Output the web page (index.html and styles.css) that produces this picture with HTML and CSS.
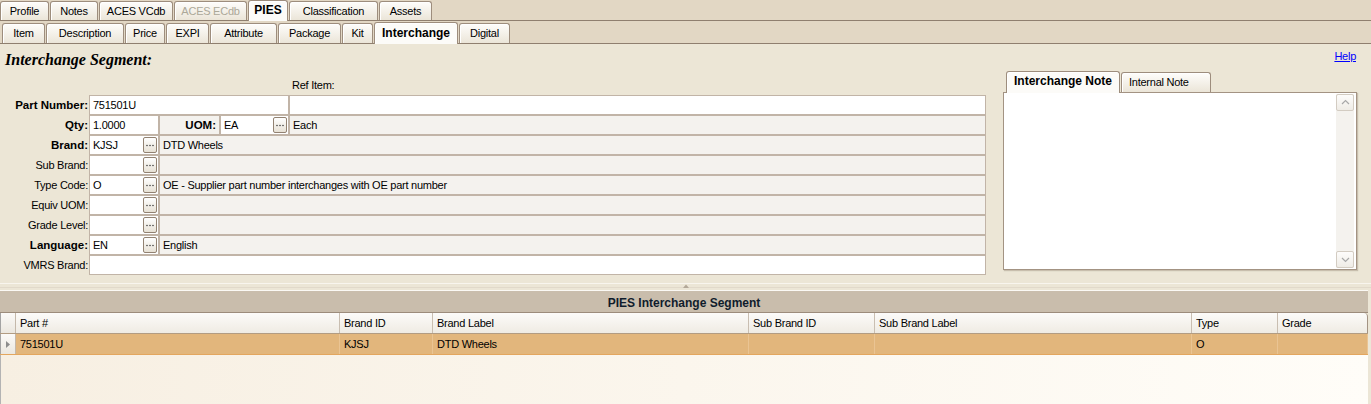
FILE: index.html
```html
<!DOCTYPE html>
<html>
<head>
<meta charset="utf-8">
<title>Interchange</title>
<link rel="stylesheet" href="styles.css">
</head>
<body>
<div class="app">
  <div class="tabbar tabbar-top">
    <div class="tab">Profile</div>
    <div class="tab">Notes</div>
    <div class="tab">ACES VCdb</div>
    <div class="tab disabled">ACES ECdb</div>
    <div class="tab active">PIES</div>
    <div class="tab">Classification</div>
    <div class="tab">Assets</div>
  </div>
  <div class="tabbar tabbar-sub">
    <div class="tab">Item</div>
    <div class="tab">Description</div>
    <div class="tab">Price</div>
    <div class="tab">EXPI</div>
    <div class="tab">Attribute</div>
    <div class="tab">Package</div>
    <div class="tab">Kit</div>
    <div class="tab active">Interchange</div>
    <div class="tab">Digital</div>
  </div>

  <div class="head">
    <div class="title">Interchange Segment:</div>
    <a class="help" href="#">Help</a>
  </div>

  <div class="main">
    <div class="form">
      <div class="ref-label">Ref Item:</div>

      <div class="lbl b">Part Number:</div>
      <div class="cell in span-2-5">751501U</div>
      <div class="cell in"></div>

      <div class="lbl b">Qty:</div>
      <div class="cell in">1.0000</div>
      <div class="cell ro lblcell b">UOM:</div>
      <div class="cell in"><span class="val">EA</span><span class="dots"><svg width="12" height="14" viewBox="0 0 12 14"><circle cx="3" cy="7.5" r="0.8" fill="#444"/><circle cx="6" cy="7.5" r="0.8" fill="#444"/><circle cx="9" cy="7.5" r="0.8" fill="#444"/></svg></span></div>
      <div class="cell ro">Each</div>

      <div class="lbl b">Brand:</div>
      <div class="cell in"><span class="val">KJSJ</span><span class="dots"><svg width="12" height="14" viewBox="0 0 12 14"><circle cx="3" cy="7.5" r="0.8" fill="#444"/><circle cx="6" cy="7.5" r="0.8" fill="#444"/><circle cx="9" cy="7.5" r="0.8" fill="#444"/></svg></span></div>
      <div class="cell ro span-3-6">DTD Wheels</div>

      <div class="lbl">Sub Brand:</div>
      <div class="cell in"><span class="val"></span><span class="dots"><svg width="12" height="14" viewBox="0 0 12 14"><circle cx="3" cy="7.5" r="0.8" fill="#444"/><circle cx="6" cy="7.5" r="0.8" fill="#444"/><circle cx="9" cy="7.5" r="0.8" fill="#444"/></svg></span></div>
      <div class="cell ro span-3-6"></div>

      <div class="lbl">Type Code:</div>
      <div class="cell in"><span class="val">O</span><span class="dots"><svg width="12" height="14" viewBox="0 0 12 14"><circle cx="3" cy="7.5" r="0.8" fill="#444"/><circle cx="6" cy="7.5" r="0.8" fill="#444"/><circle cx="9" cy="7.5" r="0.8" fill="#444"/></svg></span></div>
      <div class="cell ro span-3-6">OE - Supplier part number interchanges with OE part number</div>

      <div class="lbl">Equiv UOM:</div>
      <div class="cell in"><span class="val"></span><span class="dots"><svg width="12" height="14" viewBox="0 0 12 14"><circle cx="3" cy="7.5" r="0.8" fill="#444"/><circle cx="6" cy="7.5" r="0.8" fill="#444"/><circle cx="9" cy="7.5" r="0.8" fill="#444"/></svg></span></div>
      <div class="cell ro span-3-6"></div>

      <div class="lbl">Grade Level:</div>
      <div class="cell in"><span class="val"></span><span class="dots"><svg width="12" height="14" viewBox="0 0 12 14"><circle cx="3" cy="7.5" r="0.8" fill="#444"/><circle cx="6" cy="7.5" r="0.8" fill="#444"/><circle cx="9" cy="7.5" r="0.8" fill="#444"/></svg></span></div>
      <div class="cell ro span-3-6"></div>

      <div class="lbl b">Language:</div>
      <div class="cell in"><span class="val">EN</span><span class="dots"><svg width="12" height="14" viewBox="0 0 12 14"><circle cx="3" cy="7.5" r="0.8" fill="#444"/><circle cx="6" cy="7.5" r="0.8" fill="#444"/><circle cx="9" cy="7.5" r="0.8" fill="#444"/></svg></span></div>
      <div class="cell ro span-3-6">English</div>

      <div class="lbl">VMRS Brand:</div>
      <div class="cell in span-2-6"></div>
    </div>

    <div class="notes">
      <div class="ntabs">
        <div class="ntab active">Interchange Note</div>
        <div class="ntab">Internal Note</div>
      </div>
      <div class="nbox">
        <div class="vscroll">
          <div class="sbtn"><svg width="15" height="15" viewBox="0 0 15 15"><polyline points="4,9 7.5,5.5 11,9" fill="none" stroke="#a8a8a8" stroke-width="1.2"/></svg></div>
          <div class="sbtn"><svg width="15" height="15" viewBox="0 0 15 15"><polyline points="4,6 7.5,9.5 11,6" fill="none" stroke="#a8a8a8" stroke-width="1.2"/></svg></div>
        </div>
      </div>
    </div>
  </div>

  <div class="splitter">
    <div class="splitbar"><svg width="6" height="4" viewBox="0 0 6 4"><polygon points="0,4 3,0.5 6,4" fill="#b3a898"/></svg></div>
  </div>

  <div class="dgrid">
    <div class="dg-title">PIES Interchange Segment</div>
    <div class="dg-row dg-head">
      <div class="dg-cell c-rh"></div>
      <div class="dg-cell c-part">Part #</div>
      <div class="dg-cell c-bid">Brand ID</div>
      <div class="dg-cell c-blabel">Brand Label</div>
      <div class="dg-cell c-sid">Sub Brand ID</div>
      <div class="dg-cell c-slabel">Sub Brand Label</div>
      <div class="dg-cell c-type">Type</div>
      <div class="dg-cell c-grade">Grade</div>
    </div>
    <div class="dg-row dg-data">
      <div class="dg-cell c-rh"><svg width="4" height="7" viewBox="0 0 4 7"><polygon points="0,0 4,3.5 0,7" fill="#8c8c8c"/></svg></div>
      <div class="dg-cell c-part">751501U</div>
      <div class="dg-cell c-bid">KJSJ</div>
      <div class="dg-cell c-blabel">DTD Wheels</div>
      <div class="dg-cell c-sid"></div>
      <div class="dg-cell c-slabel"></div>
      <div class="dg-cell c-type">O</div>
      <div class="dg-cell c-grade"></div>
    </div>
    <div class="dg-fill"></div>
  </div>
</div>
</body>
</html>
```

FILE: styles.css
```css
* { box-sizing: border-box; margin: 0; padding: 0; }
html, body { width: 1371px; height: 404px; overflow: hidden; }
body {
  font-family: "Liberation Sans", Arial, sans-serif;
  font-size: 11px;
  letter-spacing: -0.25px;
  color: #000;
  background: #ece6d6;
}

/* ---------- tab bars ---------- */
.tabbar {
  display: flex;
  align-items: flex-end;
  gap: 1px;
  background: #e2d7c4;
  border-bottom: 1px solid #8f7f6f;
}
.tabbar-top { height: 21px; }
.tabbar-sub { height: 23px; padding-left: 2px; }

.tab {
  height: 19px;
  line-height: 18px;
  text-align: center;
  white-space: nowrap;
  border: 1px solid #9d8d7d;
  border-bottom: none;
  border-radius: 3px 3px 0 0;
  background: linear-gradient(#fefdfb, #ebe5d8);
  box-shadow: inset 1px 1px 0 #ffffff;
}
.tabbar-sub .tab { height: 20px; line-height: 19px; }
.tab.disabled { color: #aca899; }
.tab.active {
  position: relative;
  z-index: 1;
  height: 21px;
  margin-bottom: -1px;
  font-weight: bold;
  font-size: 12px;
  letter-spacing: 0;
  background: #fcfbf8;
}
.tabbar-sub .tab.active { height: 22px; line-height: 20px; }

.tabbar-top .tab:nth-child(1) { width: 49px; }
.tabbar-top .tab:nth-child(2) { width: 48px; }
.tabbar-top .tab:nth-child(3) { width: 74px; }
.tabbar-top .tab:nth-child(4) { width: 73px; }
.tabbar-top .tab:nth-child(5) { width: 40px; }
.tabbar-top .tab:nth-child(6) { width: 89px; }
.tabbar-top .tab:nth-child(7) { width: 53px; }

.tabbar-sub .tab:nth-child(1) { width: 43px; }
.tabbar-sub .tab:nth-child(2) { width: 78px; }
.tabbar-sub .tab:nth-child(3) { width: 40px; }
.tabbar-sub .tab:nth-child(4) { width: 43px; }
.tabbar-sub .tab:nth-child(5) { width: 67px; }
.tabbar-sub .tab:nth-child(6) { width: 63px; }
.tabbar-sub .tab:nth-child(7) { width: 31px; }
.tabbar-sub .tab:nth-child(8) { width: 84px; }
.tabbar-sub .tab:nth-child(9) { width: 51px; }

/* ---------- heading ---------- */
.head {
  height: 27px;
  padding-top: 6px;
  display: flex;
  justify-content: space-between;
  align-items: flex-start;
}
.title {
  font-family: "Liberation Serif", "Times New Roman", serif;
  font-weight: bold;
  font-style: italic;
  font-size: 16px;
  letter-spacing: 0;
  line-height: 20px;
  padding-left: 5px;
}
.help {
  color: #0000ff;
  text-decoration: underline;
  line-height: 13px;
  margin-right: 15px;
}

/* ---------- form ---------- */
.main { display: flex; align-items: flex-start; }
.form {
  width: 986px;
  padding-top: 7px;
  display: grid;
  grid-template-columns: 89px 70px 61px 69px 697px;
  grid-template-rows: 17px repeat(9, 20px);
}
.ref-label {
  grid-column: 5;
  padding-left: 3px;
  line-height: 15px;
}
.lbl {
  grid-column: 1;
  display: flex;
  align-items: center;
  justify-content: flex-end;
  padding-right: 1px;
  white-space: nowrap;
}
.b { font-weight: bold; font-size: 11.5px; letter-spacing: 0; }
.cell {
  display: flex;
  align-items: center;
  padding: 0 1px 0 3px;
  border: 1px solid #c1b4a7;
  white-space: nowrap;
  overflow: hidden;
}
.in { background: #ffffff; }
.ro { background: #f4f2ee; }
.lblcell { justify-content: flex-end; padding-right: 3px; }
.span-2-5 { grid-column: 2 / 5; }
.span-3-6 { grid-column: 3 / 6; }
.span-2-6 { grid-column: 2 / 6; }
.val { flex: 1; }
.dots {
  width: 14px;
  height: 16px;
  display: flex;
  align-items: center;
  justify-content: center;
  border: 1px solid #928272;
  border-radius: 2px;
  background: linear-gradient(#ffffff, #e7e1d5);
}

/* ---------- notes ---------- */
.notes { margin-left: 17px; width: 354px; }
.ntabs {
  display: flex;
  align-items: flex-end;
  gap: 1px;
  height: 21px;
  padding-left: 3px;
}
.ntab {
  height: 20px;
  line-height: 19px;
  padding-left: 7px;
  border: 1px solid #9d8d7d;
  border-bottom: none;
  border-radius: 3px 3px 0 0;
  background: linear-gradient(#fefdfb, #ebe5d8);
  box-shadow: inset 1px 1px 0 #ffffff;
  white-space: nowrap;
}
.ntab:nth-child(1) { width: 114px; }
.ntab:nth-child(2) { width: 90px; }
.ntab.active {
  position: relative;
  z-index: 1;
  height: 22px;
  margin-bottom: -1px;
  font-weight: bold;
  font-size: 12px;
  letter-spacing: 0;
  background: #fcfbf8;
}
.nbox {
  height: 178px;
  display: flex;
  justify-content: flex-end;
  padding: 1px 2px 1px 1px;
  background: #ffffff;
  border: 1px solid #a39383;
  box-shadow: 1px 1px 1px rgba(90, 70, 50, 0.25);
}
.vscroll {
  width: 18px;
  display: flex;
  flex-direction: column;
  justify-content: space-between;
  background: #f4f2ee;
}
.sbtn {
  height: 17px;
  display: flex;
  align-items: center;
  justify-content: center;
  border: 1px solid #d3ccc2;
  border-radius: 2px;
  background: linear-gradient(#fdfcfb, #efece6);
}

/* ---------- splitter ---------- */
.splitter { height: 15px; padding-top: 8px; }
.splitbar {
  height: 5px;
  display: flex;
  justify-content: center;
  align-items: center;
  border-top: 1px solid #f8f5ee;
  border-bottom: 1px solid #e1d9ca;
}

/* ---------- data grid ---------- */
.dgrid { width: 1368px; }
.dg-title {
  height: 23px;
  padding-top: 3px;
  line-height: 18px;
  text-align: center;
  font-weight: bold;
  font-size: 12px;
  letter-spacing: 0;
  color: #101c2c;
  background: #c9bdac;
  border-top: 1px solid #fbf9f4;
  border-bottom: 1px solid #9c8c7c;
}
.dg-row { display: flex; height: 21px; }
.dg-cell {
  height: 100%;
  padding-left: 4px;
  line-height: 20px;
  white-space: nowrap;
  overflow: hidden;
}
.dg-head { border-bottom: 1px solid #b29c82; }
.dg-head .dg-cell {
  background: linear-gradient(#fcfbf9, #efebe3);
  border-right: 1px solid #c9beb1;
}
.dg-head .c-grade { border-top-right-radius: 4px; border-right-color: #a39383; }
.dg-data { border-bottom: 1px solid #e3a65e; }
.dg-data .dg-cell {
  background: #e2b67c;
  border-right: 1px solid #eac493;
}
.c-rh {
  border-left: 1px solid #a3a3a3;
  width: 16px;
  display: flex;
  align-items: center;
  padding-left: 5px;
}
.dg-head .c-rh, .dg-data .c-rh {
  background: linear-gradient(#fbfaf8, #ebe7df);
  border-right: 1px solid #c4b8aa;
}
.c-part { width: 324px; }
.c-bid { width: 93px; }
.c-blabel { width: 316px; }
.c-sid { width: 126px; }
.c-slabel { width: 317px; }
.c-type { width: 86px; }
.c-grade { width: 90px; }
.dg-fill {
  height: 49px;
  border-left: 1px solid #b3b3b3;
  background: linear-gradient(90deg, #f7efe2, #fffdf8);
}
```
